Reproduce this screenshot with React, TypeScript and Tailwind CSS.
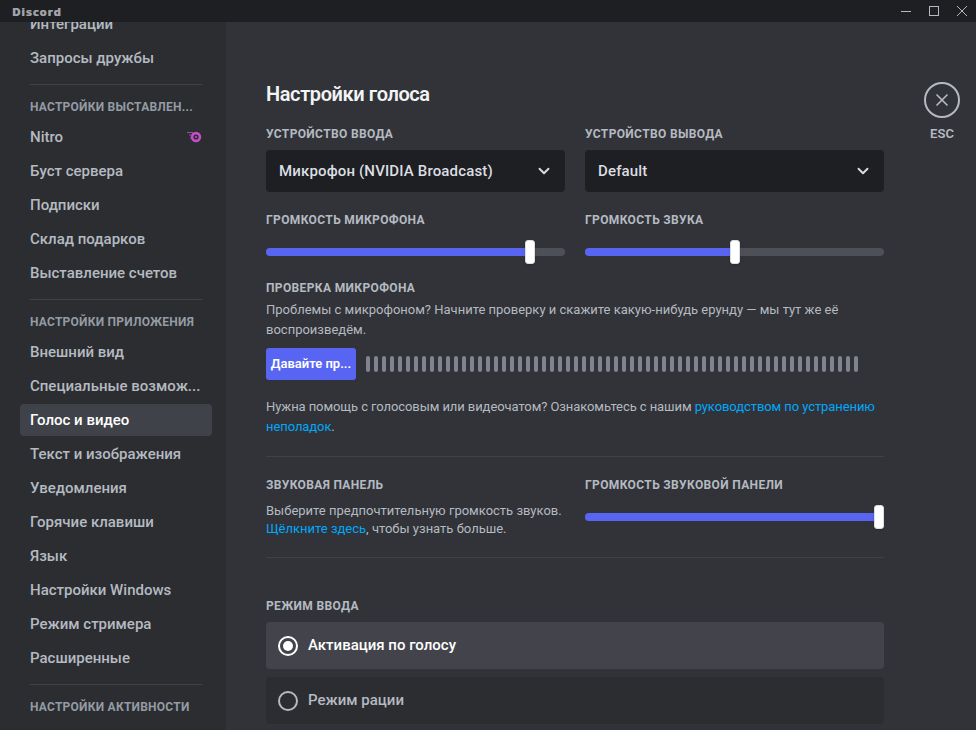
import { ChevronDown, X } from "lucide-react";

const font = { fontFamily: 'Roboto, sans-serif' };

const Label = ({ children, className = "" }: { children: React.ReactNode; className?: string }) => (
  <div className={`text-[12px] leading-4 font-bold text-[#b5bac1] uppercase tracking-[0.03em] whitespace-nowrap ${className}`}>{children}</div>
);

const SideItem = ({ label, active, children }: { label: string; active?: boolean; children?: React.ReactNode }) => (
  <div className={`h-8 mb-0.5 pl-2.5 pr-2.5 rounded flex items-center justify-between text-[15px] font-medium whitespace-nowrap ${active ? "bg-[#404249] text-white" : "text-[#b5bac1]"}`}>
    <span>{label}</span>
    {children}
  </div>
);

const SideHeader = ({ label }: { label: string }) => (
  <div className="h-[28px] pl-2.5 flex items-center text-[12px] font-bold uppercase text-[#949ba4] tracking-[0.02em] whitespace-nowrap">{label}</div>
);

const SideDivider = () => <div className="h-px bg-[#3f4147] mx-2.5 mt-2.5 mb-2" />;

const Slider = ({ value }: { value: number }) => (
  <div className="relative h-2 rounded bg-[#4e5058]">
    <div className="h-2 rounded bg-[#5865f2]" style={{ width: `${value}%` }} />
    <div className="absolute -top-2 w-2.5 h-6 rounded-[3px] bg-white shadow border border-[#dbdee1]" style={{ left: `calc(${value}% - 5px)` }} />
  </div>
);

const Select = ({ value }: { value: string }) => (
  <div className="h-[42px] rounded bg-[#1e1f22] flex items-center justify-between pl-[13px] pr-[12px] text-[15px] tracking-[0.01em] font-medium text-[#dbdee1]">
    <span className="whitespace-nowrap">{value}</span>
    <ChevronDown size={18} strokeWidth={2.5} className="text-[#dbdee1]" />
  </div>
);

const Radio = ({ label, checked }: { label: string; checked?: boolean }) => (
  <div className={`h-[47px] rounded flex items-center pl-3 gap-[10px] text-[15px] font-medium ${checked ? "bg-[#43444b] text-white" : "bg-[#2b2d31] text-[#b5bac1]"}`}>
    <div className={`w-5 h-5 rounded-full border-2 flex items-center justify-center ${checked ? "border-white" : "border-[#b5bac1]"}`}>
      {checked && <div className="w-2.5 h-2.5 rounded-full bg-white" />}
    </div>
    <span>{label}</span>
  </div>
);

const App = () => {
  return (
    <div className="w-[976px] h-[730px] overflow-hidden flex flex-col bg-[#313338]" style={font}>
      {/* title bar */}
      <div className="h-[22px] shrink-0 bg-[#1e1f22] flex items-center justify-between pl-3 relative z-10">
        <span className="mt-[3px] text-[10px] font-black text-[#a1a3a8] tracking-[0.1em] leading-none [text-shadow:0.5px_0_0_#a1a3a8]" style={{ fontFamily: '"DejaVu Sans", sans-serif' }}>Discord</span>
        <div className="flex h-full text-[#b5bac1]">
          <div className="w-7 flex items-center justify-center">
            <svg width="10" height="10" viewBox="0 0 10 10"><path d="M0 5.5h10" stroke="currentColor" /></svg>
          </div>
          <div className="w-7 flex items-center justify-center">
            <svg width="10" height="10" viewBox="0 0 10 10" fill="none"><rect x="0.5" y="0.5" width="9" height="9" stroke="currentColor" /></svg>
          </div>
          <div className="w-7 flex items-center justify-center">
            <svg width="10" height="10" viewBox="0 0 10 10"><path d="M0 0l10 10M10 0L0 10" stroke="currentColor" /></svg>
          </div>
        </div>
      </div>

      <div className="flex flex-1 min-h-0">
        {/* sidebar */}
        <div className="w-[226px] shrink-0 bg-[#2b2d31] overflow-hidden pl-5 pr-[14px]">
          <div className="-mt-[14px]">
            <SideItem label="Интеграции" />
            <SideItem label="Запросы дружбы" />
            <SideDivider />
            <SideHeader label="Настройки выставлен..." />
            <SideItem label="Nitro">
              {/* nitro badge: ring with speed lines on the left */}
              <svg width="15" height="12" viewBox="0 0 15 12" fill="none">
                <circle cx="9" cy="6" r="3.9" stroke="#c44fc9" strokeWidth="2.6" />
                <circle cx="9" cy="6" r="1.1" fill="#c44fc9" />
                <path d="M0 1.5h6M2 4h2.5M3 7h1.5" stroke="#a845b4" strokeWidth="1.2" />
              </svg>
            </SideItem>
            <SideItem label="Буст сервера" />
            <SideItem label="Подписки" />
            <SideItem label="Склад подарков" />
            <SideItem label="Выставление счетов" />
            <SideDivider />
            <SideHeader label="Настройки приложения" />
            <SideItem label="Внешний вид" />
            <SideItem label="Специальные возмож..." />
            <SideItem label="Голос и видео" active />
            <SideItem label="Текст и изображения" />
            <SideItem label="Уведомления" />
            <SideItem label="Горячие клавиши" />
            <SideItem label="Язык" />
            <SideItem label="Настройки Windows" />
            <SideItem label="Режим стримера" />
            <SideItem label="Расширенные" />
            <SideDivider />
            <SideHeader label="Настройки активности" />
          </div>
        </div>

        {/* content */}
        <div className="w-[658px] shrink-0 pl-10 overflow-hidden">
          <div className="w-[618px]">
            <h1 className="mt-[59px] text-[20px] leading-[26px] font-semibold tracking-[-0.02em] text-[#f2f3f5]">Настройки голоса</h1>

            <div className="mt-[19px] grid grid-cols-2 gap-x-5">
              <div>
                <Label className="mb-2">Устройство ввода</Label>
                <Select value="Микрофон (NVIDIA Broadcast)" />
              </div>
              <div>
                <Label className="mb-2">Устройство вывода</Label>
                <Select value="Default" />
              </div>
            </div>

            <div className="mt-5 grid grid-cols-2 gap-x-5">
              <div>
                <Label className="mb-5">Громкость микрофона</Label>
                <Slider value={88.3} />
              </div>
              <div>
                <Label className="mb-5">Громкость звука</Label>
                <Slider value={50} />
              </div>
            </div>

            <Label className="mt-6">Проверка микрофона</Label>
            <p className="mt-1 text-[13px] leading-5 text-[#b5bac1]">
              Проблемы с микрофоном? Начните проверку и скажите какую-нибудь ерунду — мы тут же её воспроизведём.
            </p>
            <div className="mt-2 flex items-center gap-[10px]">
              <button className="w-[90px] h-8 rounded-[3px] bg-[#5865f2] text-white text-[13px] font-semibold whitespace-nowrap">Давайте пр...</button>
              <div className="flex gap-1">
                {Array.from({ length: 62 }).map((_, i) => (
                  <div key={i} className="w-1 h-4 rounded-sm bg-[#80848e]" />
                ))}
              </div>
            </div>
            <p className="mt-[17px] text-[13px] leading-5 tracking-[-0.08px] text-[#b5bac1]">
              Нужна помощь с голосовым или видеочатом? Ознакомьтесь с нашим <span className="text-[#00a8fc]">руководством по устранению неполадок</span>.
            </p>
            <div className="mt-[19px] h-px bg-[#3f4147]" />

            <div className="mt-5 grid grid-cols-2 gap-x-5">
              <div>
                <Label>Звуковая панель</Label>
                <p className="mt-[9px] text-[13px] leading-[18px] text-[#b5bac1]">
                  Выберите предпочтительную громкость звуков. <span className="text-[#00a8fc]">Щёлкните здесь</span>, чтобы узнать больше.
                </p>
              </div>
              <div>
                <Label className="mb-5">Громкость звуковой панели</Label>
                <Slider value={98.4} />
              </div>
            </div>
            <div className="mt-[19px] h-px bg-[#3f4147]" />

            <Label className="mt-10 mb-2">Режим ввода</Label>
            <div className="flex flex-col gap-2">
              <Radio label="Активация по голосу" checked />
              <Radio label="Режим рации" />
            </div>
          </div>
        </div>

        {/* esc */}
        <div className="flex-1 pl-10 pt-[60px]">
          <div className="w-9 flex flex-col items-center text-[#b5bac1]">
            <div className="w-9 h-9 rounded-full border-2 border-[#b5bac1] flex items-center justify-center">
              <X size={20} strokeWidth={2} />
            </div>
            <span className="mt-[8px] text-[13px] leading-4 font-semibold">ESC</span>
          </div>
        </div>
      </div>
    </div>
  );
};

export default App;
